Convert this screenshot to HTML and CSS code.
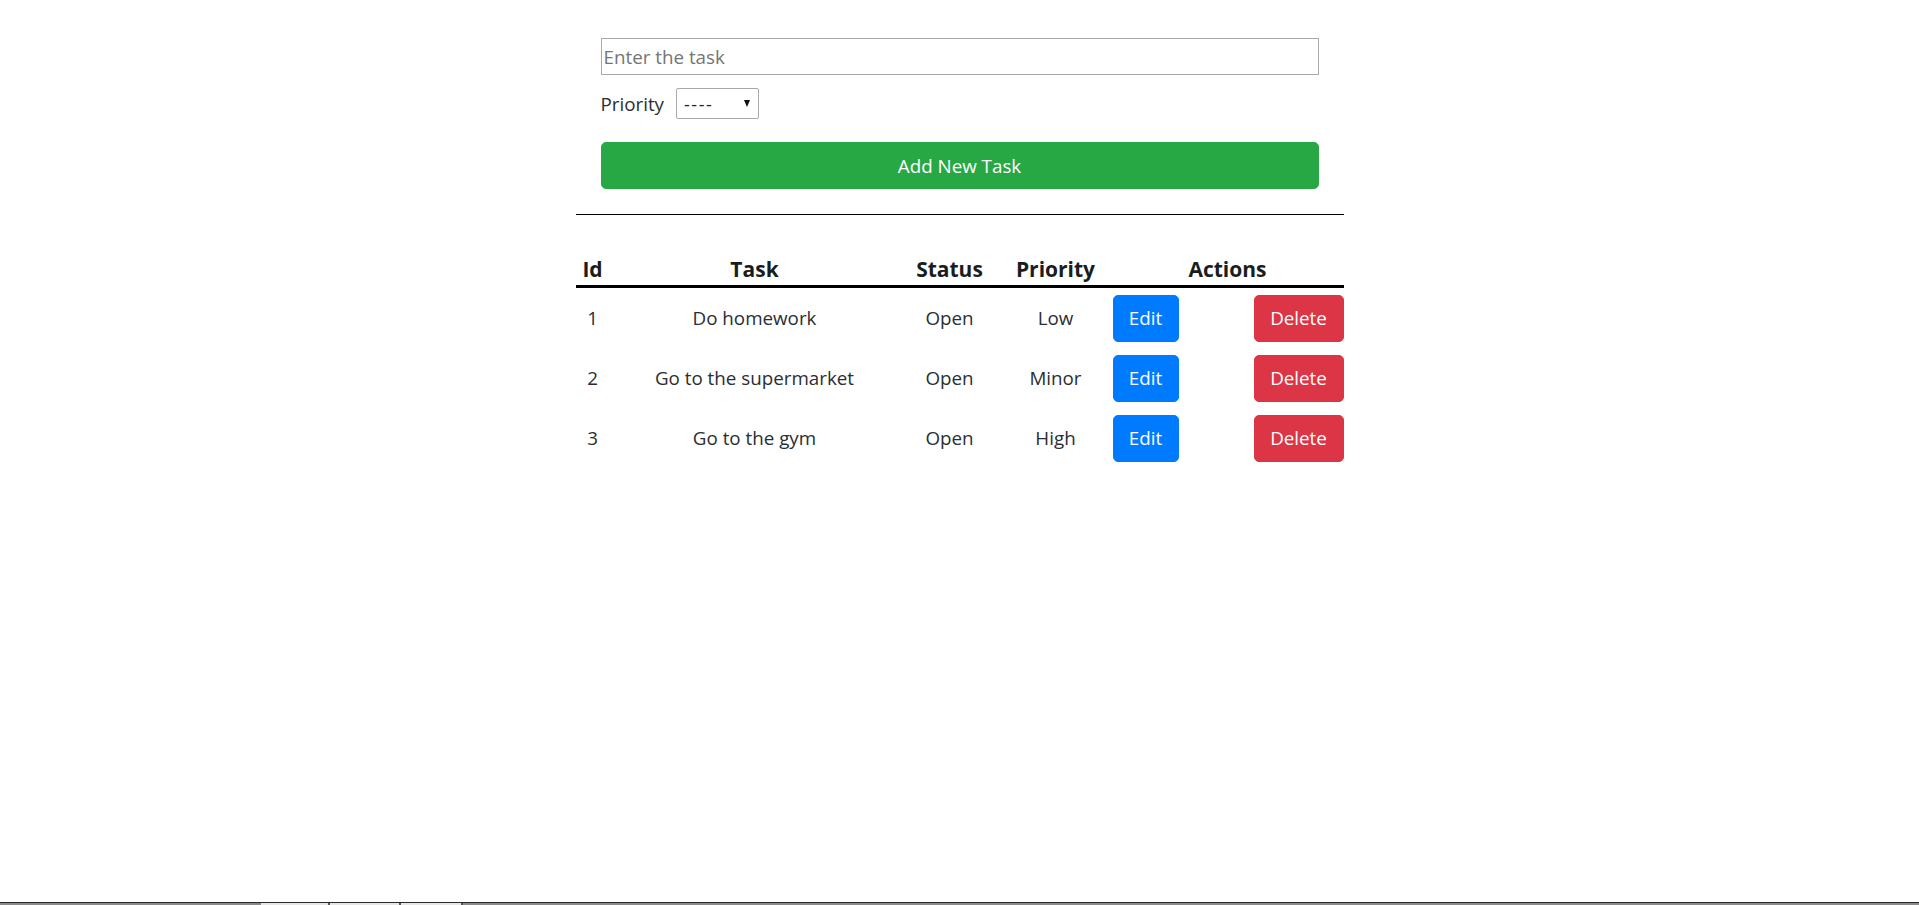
FILE: index.html
```html
<!DOCTYPE html>
<html lang="en">
<head>
<meta charset="utf-8">
<title>Tasks</title>
<link rel="stylesheet" href="styles.css">
</head>
<body>
<div class="app">
  <form class="task-form">
    <input class="task-input" type="text" placeholder="Enter the task">
    <div class="priority-row">
      <label class="priority-label">Priority</label>
      <span class="select-wrap">
        <select class="priority-select">
          <option>----</option>
          <option>Low</option>
          <option>Minor</option>
          <option>High</option>
        </select>
      </span>
    </div>
    <button type="button" class="btn btn-success btn-block">Add New Task</button>
  </form>
  <hr class="divider">
  <table class="task-table">
    <colgroup>
      <col class="c-id"><col class="c-task"><col class="c-status"><col class="c-priority"><col class="c-edit"><col class="c-delete">
    </colgroup>
    <thead>
      <tr>
        <th class="th-id">Id</th>
        <th>Task</th>
        <th>Status</th>
        <th>Priority</th>
        <th colspan="2">Actions</th>
      </tr>
    </thead>
    <tbody>
      <tr>
        <td>1</td><td>Do homework</td><td>Open</td><td>Low</td>
        <td class="td-edit"><button class="btn btn-primary btn-edit">Edit</button></td>
        <td class="td-delete"><button class="btn btn-danger btn-delete">Delete</button></td>
      </tr>
      <tr>
        <td>2</td><td>Go to the supermarket</td><td>Open</td><td>Minor</td>
        <td class="td-edit"><button class="btn btn-primary btn-edit">Edit</button></td>
        <td class="td-delete"><button class="btn btn-danger btn-delete">Delete</button></td>
      </tr>
      <tr>
        <td>3</td><td>Go to the gym</td><td>Open</td><td>High</td>
        <td class="td-edit"><button class="btn btn-primary btn-edit">Edit</button></td>
        <td class="td-delete"><button class="btn btn-danger btn-delete">Delete</button></td>
      </tr>
    </tbody>
  </table>
</div>
<div class="taskbar">
  <span class="tb-seg tb-dark tb-a"></span>
  <span class="tb-seg tb-light tb-b"></span>
  <span class="tb-seg tb-light tb-c"></span>
  <span class="tb-seg tb-light tb-d"></span>
  <span class="tb-seg tb-dark tb-e"></span>
</div>
</body>
</html>
```

FILE: styles.css
```css
html, body {
  margin: 0;
  padding: 0;
  background: #fff;
}

body {
  font-family: "Segoe UI", "Open Sans", "Noto Sans", sans-serif;
  font-size: 18.8px;
  line-height: 30px;
  color: #2a2e33;
}

.app {
  width: 768px;
  margin: 0 auto;
  padding-top: 38px;
}

.task-form {
  padding: 0 25px;
  display: flex;
  flex-direction: column;
}

.task-input {
  box-sizing: border-box;
  height: 37px;
  width: 100%;
  margin: 0;
  border: 1px solid #a9a9a9;
  padding: 0 2px;
  font-family: inherit;
  font-size: 18.8px;
  color: #212529;
  outline: none;
}

.task-input::placeholder {
  color: #757575;
}

.priority-row {
  display: flex;
  align-items: center;
  gap: 12px;
  margin-top: 13px;
  height: 31px;
}

.priority-label {
  line-height: 30px;
}

.select-wrap {
  position: relative;
  display: inline-block;
}

.select-wrap::after {
  content: "";
  position: absolute;
  right: 9px;
  top: 12px;
  border-left: 3.5px solid transparent;
  border-right: 3.5px solid transparent;
  border-top: 7px solid #111;
  pointer-events: none;
}

.priority-select {
  -webkit-appearance: none;
  appearance: none;
  box-sizing: border-box;
  width: 83px;
  height: 31px;
  margin: 0;
  padding: 0 0 0 7px;
  border: 1px solid #a9a9a9;
  border-radius: 2px;
  background: #fff;
  font-family: inherit;
  font-size: 18px;
  letter-spacing: 1.5px;
  color: #212529;
}

.btn {
  box-sizing: border-box;
  border: 1px solid transparent;
  border-radius: 5px;
  font-family: inherit;
  font-size: 18.8px;
  line-height: 30px;
  color: #fff;
  text-align: center;
  cursor: pointer;
  padding: 0;
}

.btn-block {
  display: block;
  width: 100%;
  height: 47px;
  margin-top: 23px;
}

.btn-success {
  background: #28a745;
  border-color: #28a745;
}

.btn-primary {
  background: #007bff;
  border-color: #007bff;
}

.btn-danger {
  background: #dc3545;
  border-color: #dc3545;
}

.divider {
  margin: 25px 0 0;
  border: 0;
  border-top: 1px solid #000;
  height: 0;
}

.task-table {
  margin-top: 39px;
  width: 768px;
  border-collapse: collapse;
  table-layout: fixed;
}

.c-id { width: 34px; }
.c-task { width: 290px; }
.c-status { width: 100px; }
.c-priority { width: 112px; }
.c-edit { width: 76px; }
.c-delete { width: 156px; }

.task-table th {
  font-weight: 700;
  font-size: 21px;
  line-height: 30px;
  padding: 0 0 1px;
  text-align: center;
  color: #1a1d20;
  border-bottom: 3px solid #000;
  vertical-align: bottom;
}

.task-table td {
  height: 60px;
  padding: 0;
  text-align: center;
  vertical-align: middle;
}

.task-table .td-edit {
  text-align: left;
  padding-left: 1px;
}

.task-table .td-delete {
  text-align: right;
}

.btn-edit {
  width: 66px;
  height: 47px;
  vertical-align: middle;
}

.btn-delete {
  width: 90px;
  height: 47px;
  vertical-align: middle;
}

.taskbar {
  position: fixed;
  left: 0;
  right: 0;
  bottom: 0;
  height: 2px;
  border-top: 1px solid #2b2b2b;
  display: flex;
}

.tb-seg { display: block; height: 2px; }
.tb-dark { background: #8a8a8a; }
.tb-light { background: #e6e6e6; border-right: 2px solid #555; }
.tb-a { width: 261px; }
.tb-b { width: 67px; }
.tb-c { width: 69px; }
.tb-d { width: 60px; }
.tb-e { flex: 1; }
```
